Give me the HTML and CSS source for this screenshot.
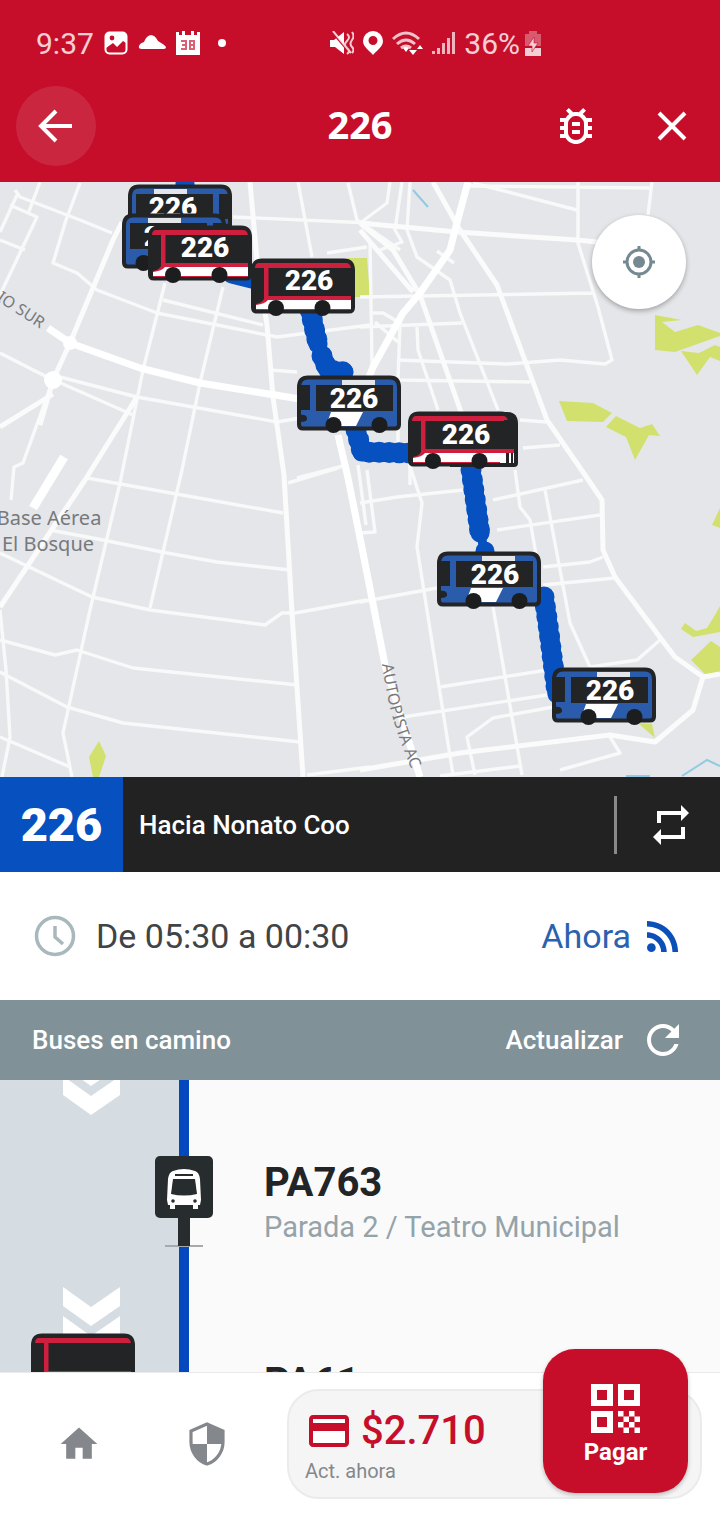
FILE: index.html
```html
<!DOCTYPE html>
<html lang="es">
<head>
  <meta charset="UTF-8" />
  <meta name="viewport" content="width=device-width, initial-scale=1" />
  <title>Recorrido 226</title>
  <link rel="stylesheet" href="styles.css">
</head>
<body>

  <header class="top">
    <div class="status">
      <div class="status-group">
        <span class="clock">9:37</span>
        <svg width="24" height="24" viewBox="0 0 24 24"><rect x="1.5" y="1.5" width="21" height="21" rx="4" fill="none" stroke="#fff" stroke-width="2"/><path d="M2 2h20v10l-3-2-6 6-4-4-7 5z" fill="#fff"/><circle cx="8" cy="7" r="2.4" fill="#c60e2b"/></svg>
        <svg width="28" height="24" viewBox="0 0 28 24"><path d="M4 18q-4 0-3-3 1-3 5-4 2-6 7-7 4 0 7 6 7 4 8 6 0 2-2 2z" fill="#fff"/></svg>
        <svg width="24" height="24" viewBox="0 0 24 24"><path d="M0 1h3v3h3V0h3v4h6V0h3v4h3V1h3v23H0z" fill="#fff"/><path d="M5 9h6v10H5v-2h4v-2H6v-2h3v-2H5zM13 9h6v10h-6zm2 2v2h2v-2zm0 4v2h2v-2z" fill="#c60e2b" fill-rule="evenodd" opacity=".65"/></svg>
        <span class="dot"></span>
      </div>
      <div class="status-group status-right">
        <svg width="24" height="24" viewBox="0 0 24 24"><path d="M0 9h4l10-8v22L5 16H0z" fill="#fff"/><path d="M2 1l18 21" stroke="#c60e2b" stroke-width="2"/><path d="M3 0l18 22M17 3q4 3 0 7t0 7 0 6M22 1q3 4 0 8t0 7 0 6" stroke="#fff" stroke-width="2" fill="none" opacity=".8"/></svg>
        <svg width="22" height="24" viewBox="0 0 22 24"><path d="M11 0a10 10 0 0 1 10 10c0 6-7 10-10 14C8 20 1 16 1 10A10 10 0 0 1 11 0zm0 5a4.5 4.5 0 1 0 0 9 4.5 4.5 0 0 0 0-9z" fill="#fff"/></svg>
        <svg width="32" height="24" viewBox="0 0 32 24"><g fill="none" stroke="#fff" stroke-width="3" opacity=".75"><path d="M1 8q13-12 26 0M5 13q9-8 18 0M9 17q5-4 10 0"/></g><path d="M14 21l-3-4q3-2 6 0zM28 14l3 4h-6zM21 24l-4-5h8z" fill="#fff"/></svg>
        <svg width="24" height="24" viewBox="0 0 24 24"><path d="M0 20h3v3H0zM5 17h3v6H5zM10 12h3v11h-3zM15 7h3v16h-3zM20 1h3v22h-3z" fill="#fff" opacity=".7"/></svg>
        <span class="battery">36%<svg width="18" height="25" viewBox="0 0 18 25"><path d="M5 0h8v3h4v12H1V3h4z" fill="#fff" opacity=".4"/><path d="M1 17h16v8H1z" fill="#fff"/><path d="M10 6v6h4l-6 9v-6H4z" fill="#fff" stroke="#c60e2b" stroke-width=".6"/></svg></span>
      </div>
    </div>

    <div class="appbar">
      <button class="back" aria-label="Volver">
        <svg width="36" height="36" viewBox="0 0 36 36"><path d="M18 3L3 18l15 15M4 18h30" fill="none" stroke="#fff" stroke-width="4"/></svg>
      </button>
      <h1>226</h1>
      <div class="actions">
        <button aria-label="Reportar un problema">
          <svg width="48" height="48" viewBox="0 0 24 24"><path fill="#fff" d="M20 8h-2.810c-.45-.78-1.070-1.450-1.820-1.960L17 4.410 15.590 3l-2.170 2.170C12.960 5.060 12.490 5 12 5s-.96.06-1.410.17L8.410 3 7 4.410l1.620 1.630C7.880 6.550 7.260 7.220 6.810 8H4v2h2.090c-.05.33-.09.66-.09 1v1H4v2h2v1c0 .34.04.67.09 1H4v2h2.810c1.040 1.790 2.970 3 5.190 3s4.150-1.210 5.190-3H20v-2h-2.090c.05-.33.09-.66.09-1v-1h2v-2h-2v-1c0-.34-.04-.67-.09-1H20V8zm-4 4v3c0 .22-.03.47-.07.7l-.1.65-.37.65c-.72 1.240-2.040 2-3.460 2s-2.740-.77-3.460-2l-.37-.64-.1-.65C8.030 15.480 8 15.230 8 15v-4c0-.23.03-.48.07-.7l.1-.65.37-.65c.3-.52.72-.97 1.210-1.310l.57-.39.74-.18c.31-.08.63-.12.94-.12.32 0 .63.04.95.12l.68.16.61.42c.5.34.91.78 1.210 1.310l.38.65.1.65c.04.22.07.47.07.69v1zm-6 2h4v2h-4zm0-4h4v2h-4z"/></svg>
        </button>
        <button aria-label="Cerrar">
          <svg width="30" height="30" viewBox="0 0 30 30"><path d="M2 2l26 26M28 2L2 28" stroke="#fff" stroke-width="4"/></svg>
        </button>
      </div>
    </div>
  </header>

  <main class="content">
    <section class="map" aria-label="Mapa del recorrido">
      <svg class="map-canvas" viewBox="0 182 720 595" preserveAspectRatio="xMidYMid slice">
        <defs>
          <symbol id="bus-red" viewBox="0 0 104 60" overflow="visible">
            <path d="M11 1.5h82q9 0 9 10v37q0 4-4 4H6q-4 0-4-4v-37q0-10 9-10z" fill="#222426" stroke="#222426" stroke-width="4"/>
            <path d="M7 4h88q4 0 5 5H17.500V37H100v14H5v-6q6-1 8-5V9H4Q4 5 7 4z" fill="#cf1f3e"/>
            <path d="M17 41h83v9H5v-4q9-1 12-5z" fill="#fff"/>
            <circle cx="25" cy="49" r="8" fill="#1c1d1f"/><circle cx="71.5" cy="49" r="8" fill="#1c1d1f"/>
          </symbol>
          <symbol id="bus-blue" viewBox="0 0 104 60" overflow="visible">
            <path d="M11 1.5h82q9 0 9 10v37q0 4-4 4H6q-4 0-4-4v-37q0-10 9-10z" fill="#2a5cab" stroke="#222426" stroke-width="4"/>
            <path d="M3 9h10v25H3zM19 9h77v26H19z" fill="#222426"/>
            <path d="M45 4h33v5H45z" fill="#e4e5e8"/>
            <path d="M34 36h32l-7 14H29z" fill="#fff"/>
            <path d="M3 39q6-1 7 3t-7 4z" fill="#222426"/>
            <circle cx="36.5" cy="49" r="8" fill="#1c1d1f"/><circle cx="82.5" cy="49" r="8" fill="#1c1d1f"/>
          </symbol>
        </defs>

        <rect y="182" width="720" height="595" fill="#e4e6ea"/>

        <!-- parks -->
        <g fill="#d2e16e">
          <path d="M347 258h20l3 39h-20z"/>
          <path d="M655 315l27 5-20 2 13 10 23-7 22 8v3l-45 16-20-2z"/>
          <path d="M681 351l18 2 16-8 5 2v14l-10-4-13 18z"/>
          <path d="M559 401l34 2 19 10-9 9-36-1z"/>
          <path d="M606 427l10-11 24 12 12-4 8 12-11-1-14 25-9-23z"/>
          <path d="M99 741l7 15-7 21h-6l-4-20z"/>
          <path d="M720 508v20l-8-3zM720 606v26l-27 5-12-8 4-6 11 8 11-3 8-13z"/>
          <path d="M711 641l9 6v25l-13 4-16-16zM638 723l14 1 3 14z"/>
        </g>

        <g fill="none" stroke="#8fcbe2" stroke-width="2">
          <path d="M413 190l15 17M682 776l25-16 13 6M626 776h24"/>
        </g>

        <!-- streets -->
        <g fill="none" stroke="#f8f9f9" stroke-width="3.4" stroke-linejoin="round">
          <path d="M15 190l5 7 60 23 32 13M17 195L0 232M80 183L66 220 53 263l24 10 20 17 60 23 120 24 93-12"/>
          <path d="M10 205l27 12L0 295M0 240l25 10M40 182L28 214"/>
          <path d="M165 283l-22 87-23 113-30 127-27 123 9 44M223 287l-23 96-18 87-32 138"/>
          <path d="M298 182l14 75M348 183l9 37 43 30M233 217l137 6M163 300l100 25"/>
          <path d="M0 353l47 24 86 38M60 377l77 20 140 25 23-4M270 370l27 2M327 253l40-6"/>
          <path d="M87 478l196 35M50 530l53 10 64 13 50 9 73 8M0 553l92 44 58 13 115 15 17-12h13l72-13"/>
          <path d="M0 640l55 15 22-5 56 18 165 17M0 672l67 35 56 16 177 19M0 737l70 30"/>
          <path d="M0 610l6 60 4 67-8 40M11 500l3-33 9-4 30-83M297 478l50-13M307 775l63-8M288 483l50-15"/>
          <path d="M390 182l-3 21-27 20M402 182l-7 48 7 12-22 8M410 182l-3 48 10 27 33 23 10 33 38 97"/>
          <path d="M473 183l104 27M578 182v61l20 64 14 53-7 4-45-4-53 4-110-4M360 297l233-4M360 327l102-4"/>
          <path d="M417 327l1 23 20 60M370 240l2 125M373 313h10l17 10-2 57 132 2M375 322l23 20M520 420l27 2M523 448l37-3"/>
          <path d="M652 182l-4 33M437 251l17 12M470 186l180 2M398 385v70M358 465l8 60M410 465v20"/>
          <path d="M408 460l14 43-5 44 36 228M360 503l37-6 66-7M493 500l90-20M497 530l103-15"/>
          <path d="M515 470l5 37 10 13 7 40M545 490l25 133 20 44M543 567l47-5 13-5M543 585l72-7M360 602l77-14"/>
          <path d="M493 607l29 168M440 687l107-17M403 717l144-22M553 707l-60 11-26 19 8 38M590 667l47-7 23-20"/>
          <path d="M610 737l10 16-60 17M367 470l8 62-15 1M440 776l80-10"/>
        </g>
        <g fill="none" stroke="#fbfbfc" stroke-width="5" stroke-linejoin="round">
          <path d="M122 222l-9 18-43 103-17 37-13 45M250 182l7 78 10 65 6 72 11 78 8 138 11 164"/>
          <path d="M360 223l97 9 120 8 30 3M137 397l-52 83-85 127M0 427l53-33"/>
          <path d="M360 223l33 27 27 45 42 120M360 230l53 62"/>
          <path d="M433 182l27 48 37 55 50 135 38 55 17 25 1 50 12 27 47 63 13 17 28 20-10 33-38 32-45-7-150 18-100 17M703 677l17-3"/>
        </g>
        <g fill="none" stroke="#fff" stroke-width="7" stroke-linejoin="round">
          <path d="M48 328l22 15 70 25 60 15 100 16"/>
          <path d="M468 182l-13 48-5 20-30 43-17 20-30 54-12 30M338 435l10 43 15 75 22 112 35 112"/>
          <path d="M64 457l-31 51" stroke-width="9"/>
        </g>
        <circle cx="53" cy="380" r="9" fill="#fff"/>
        <circle cx="70" cy="343" r="7" fill="#fff"/>

        <!-- map labels -->
        <g class="map-label">
          <text class="road" transform="translate(-4 300) rotate(33)">IO SUR</text>
          <text x="49" y="525" text-anchor="middle">Base Aérea</text>
          <text x="48" y="551" text-anchor="middle">El Bosque</text>
          <path id="autopista" d="M382 664Q388 708 400 740T424 800" fill="none"/>
          <text class="road"><textPath href="#autopista">AUTOPISTA AC</textPath></text>
        </g>

        <!-- route -->
        <g fill="none" stroke="#0750bf" stroke-width="19" stroke-linecap="round" stroke-linejoin="round">
          <path d="M185 184v20M232 274l24 6M310 310l8 34M322 356l6 14 16 2M356 430l6 22 50 1M471 470l9 63M485 551v8M544 597l5 35 8 62"/>
          <path d="M316 340l8 18M481 535l3 15" stroke-width="9"/>
          <path d="M310 310l8 34M322 356l6 14 16 2M356 430l6 22 50 1M471 470l9 63M544 597l5 35 8 62" stroke-width="21" stroke-dasharray="0 10"/>
        </g>

        <!-- buses -->
        <g class="bus-number">
          <use href="#bus-blue" width="104" height="60" transform="translate(232 185) scale(-1 1)"/>
          <text x="173" y="217">226</text>
          <use href="#bus-blue" width="104" height="60" transform="translate(226 214) scale(-1 1)"/>
          <text x="168" y="246">226</text>
          <use href="#bus-red" x="148" y="226" width="104" height="60"/>
          <text x="205" y="257">226</text>
          <use href="#bus-red" x="251" y="259" width="104" height="60"/>
          <text x="309" y="290">226</text>
          <use href="#bus-blue" x="297" y="376" width="104" height="60"/>
          <text x="354" y="408">226</text>
          <!-- longer red bus with a rear door -->
          <path d="M450 412h57q11 0 11 12v39q0 4-4 4h-64z" fill="#222426"/>
          <use href="#bus-red" x="408" y="412" width="104" height="60"/>
          <path d="M504 420h11v46h-11z" fill="#222426"/>
          <path d="M500 449h14v4h-14z" fill="#cf1f3e"/>
          <path d="M500 453h6v10h-6zM509 453h2v10h-2zM513 453h1v10h-1z" fill="#fff"/>
          <text x="466" y="444">226</text>
          <use href="#bus-blue" x="437" y="552" width="104" height="60"/>
          <text x="495" y="584">226</text>
          <use href="#bus-blue" x="552" y="668" width="104" height="60"/>
          <text x="610" y="700">226</text>
        </g>
      </svg>
      <button class="locate" aria-label="Mi ubicación">
        <svg width="34" height="34" viewBox="0 0 34 34"><g fill="none" stroke="#748990" stroke-width="3"><circle cx="17" cy="17" r="12"/><path d="M17 1v5M17 28v5M1 17h5M28 17h5"/></g><circle cx="17" cy="17" r="6" fill="#748990"/></svg>
      </button>
    </section>

    <section class="route">
      <strong class="route-number">226</strong>
      <span class="route-name">Hacia Nonato Coo</span>
      <button class="swap" aria-label="Cambiar sentido">
        <svg width="48" height="48" viewBox="0 0 24 24"><path fill="#fff" d="M7 7h10v3l4-4-4-4v3H5v6h2V7zm10 10H7v-3l-4 4 4 4v-3h12v-6h-2v4z"/></svg>
      </button>
    </section>

    <section class="schedule">
      <svg width="42" height="42" viewBox="0 0 42 42"><g fill="none" stroke="#a9b8bc" stroke-width="3.5"><circle cx="21" cy="21" r="18.5"/><path d="M21 11v11l8 7"/></g></svg>
      <span class="hours">De 05:30 a 00:30</span>
      <a class="now" href="#">Ahora
        <svg width="48" height="48" viewBox="0 0 24 24"><g fill="#0b50b8"><circle cx="6.18" cy="17.82" r="2.18"/><path d="M4 4.440v2.830c7.030 0 12.730 5.700 12.730 12.730h2.830c0-8.590-6.970-15.560-15.560-15.560zm0 5.660v2.830c3.900 0 7.070 3.170 7.070 7.070h2.830c0-5.470-4.430-9.900-9.900-9.900z"/></g></svg>
      </a>
    </section>

    <div class="arrivals-head">
      <h2>Buses en camino</h2>
      <button class="refresh">Actualizar
        <svg width="48" height="48" viewBox="0 0 24 24"><path fill="#fff" d="M17.650 6.350C16.200 4.900 14.210 4 12 4c-4.420 0-7.990 3.580-7.990 8s3.570 8 7.990 8c3.730 0 6.840-2.550 7.730-6h-2.080c-.82 2.330-3.040 4-5.650 4-3.310 0-6-2.690-6-6s2.690-6 6-6c1.660 0 3.140.69 4.220 1.780L13 11h7V4l-2.350 2.350z"/></svg>
      </button>
    </div>

    <ul class="stops">
      <li class="stop">
        <svg class="lane" width="216" height="200" viewBox="0 0 216 200">
          <path d="M0 0h179v200H0z" fill="#d5dce2"/><path d="M179 0h10v200h-10z" fill="#0548bd"/>
          <path d="M63-33l28 20 29-20v19L91 6 63-14zM63-4l28 20 29-20v19L91 35 63 15z" fill="#fff"/>
          <path d="M165 166h38" stroke="#a6aaad" stroke-width="2"/>
          <path d="M178 134h12v32h-12z" fill="#272c2f"/>
          <rect x="155" y="76" width="58" height="62" rx="5" fill="#272c2f"/>
          <path d="M173 91q11-4 22 0 4 1 5 8l1 21-1 5h-2v4h-5v-4h-18v4h-5v-4h-2l-1-5 1-21q1-7 5-8z" fill="#fff"/>
          <path d="M175 95h18" stroke="#272c2f" stroke-width="2"/>
          <path d="M173 99h22l2 15q-13 3-26 0z" fill="#272c2f"/>
          <circle cx="173" cy="121" r="1.8" fill="#272c2f"/><circle cx="195" cy="121" r="1.8" fill="#272c2f"/>
        </svg>
        <div class="stop-text">
          <h3>PA763</h3>
          <p>Parada 2 / Teatro Municipal</p>
        </div>
      </li>
      <li class="stop">
        <svg class="lane" width="216" height="200" viewBox="0 0 216 200">
          <path d="M0 0h179v200H0z" fill="#d5dce2"/><path d="M179 0h10v200h-10z" fill="#0548bd"/>
          <path d="M63 7l28 20 29-20v19L91 46 63 26zM63 36l28 20 29-20v19L91 75 63 55z" fill="#fff"/>
          <use href="#bus-red" x="31" y="54" width="104" height="60"/>
        </svg>
        <div class="stop-text">
          <h3>PA61</h3>
        </div>
      </li>
    </ul>
  </main>

  <nav class="bottom">
    <a class="tab" href="#" aria-label="Inicio">
      <svg width="44" height="44" viewBox="0 0 24 24"><path fill="#84888c" d="M10 20v-6h4v6h5v-8h3L12 3 2 12h3v8z"/></svg>
    </a>
    <a class="tab" href="#" aria-label="Seguridad">
      <svg width="48" height="48" viewBox="0 0 24 24"><path d="M12 2L4 5.500V11c0 5 3.400 9.700 8 11 4.600-1.300 8-6 8-11V5.500z" fill="#fff" stroke="#84888c" stroke-width="1.6"/><path d="M12 2l8 3.500V12h-8zM12 12v10c-4.200-1.400-7.600-5.400-8-10z" fill="#84888c"/></svg>
    </a>
    <div class="balance">
      <div class="amount">
        <svg width="48" height="48" viewBox="0 0 24 24"><path d="M4 6h16v12H4z" fill="#fff"/><path fill="#c60e2b" d="M20 4H4c-1.110 0-1.990.89-1.990 2L2 18c0 1.110.89 2 2 2h16c1.110 0 2-.89 2-2V6c0-1.110-.89-2-2-2zm0 14H4v-6h16v6zm0-10H4V6h16v2z"/></svg>
        $2.710
      </div>
      <div class="updated">Act. ahora</div>
      <button class="pay">
        <svg width="50" height="50" viewBox="0 0 50 50"><path fill="#fff" fill-rule="evenodd" d="M0 0h22v22H0zM6 6v10h10V6zM27 0h22v22H27zM33 6v10h10V6zM0 27h22v22H0zM6 33v10h10V33z"/><path fill="#fff" d="M27 27h5.500v5.500H27zM38 27h5.500v5.500H38zM32.500 32.500H38V38h-5.500zM43.500 32.500H49V38h-5.500zM27 38h5.500v5.500H27zM38 38h5.500v5.500H38zM32.500 43.500H38V49h-5.500zM43.500 43.500H49V49h-5.500z"/></svg>
        Pagar
      </button>
    </div>
  </nav>

</body>
</html>
```
FILE: styles.css
```css
* {
  box-sizing: border-box;
}

body {
  margin: 0;
  height: 100vh;
  display: flex;
  flex-direction: column;
  background: #fff;
  color: #222426;
  font-family: Roboto, "Liberation Sans", sans-serif;
}

h1, h2, h3, p, ul {
  margin: 0;
  padding: 0;
}

button {
  display: flex;
  align-items: center;
  justify-content: center;
  padding: 0;
  border: none;
  background: none;
  color: inherit;
  font: inherit;
  cursor: pointer;
}

a {
  color: inherit;
  text-decoration: none;
}

svg {
  display: block;
  flex: none;
}

/* Header */
.top {
  background: #c60e2b;
  color: #fff;
  padding-bottom: 16px;
}

.status {
  display: flex;
  align-items: center;
  justify-content: space-between;
  height: 86px;
  padding: 0 178px 0 36px;
}

.status-group {
  display: flex;
  align-items: center;
  gap: 10px;
}

.status-right {
  gap: 8px;
}

.clock,
.battery {
  font-size: 30px;
  opacity: 0.8;
}

.battery {
  display: flex;
  align-items: center;
  gap: 4px;
}

.dot {
  width: 8px;
  height: 8px;
  margin-left: 8px;
  border-radius: 50%;
  background: #fff;
}

.appbar {
  display: grid;
  grid-template-columns: 1fr auto 1fr;
  align-items: center;
}

.appbar h1 {
  font: bold 38px/48px "Noto Sans", sans-serif;
  padding-bottom: 4px;
}

.back {
  width: 80px;
  height: 80px;
  margin-left: 16px;
  border-radius: 50%;
  background: rgba(255, 255, 255, 0.1);
}

.actions {
  display: flex;
  justify-content: flex-end;
}

.actions button {
  width: 96px;
  height: 80px;
}

.content {
  flex: 1;
  min-height: 0;
  display: flex;
  flex-direction: column;
}

/* Map */
.map {
  position: relative;
}

.map-canvas {
  width: 100%;
  aspect-ratio: 720 / 595;
}

.map-label {
  fill: #77797d;
  font: 20px "Noto Sans", sans-serif;
}

.map-label .road {
  font-size: 16px;
}

.bus-number text {
  fill: #fff;
  font-size: 28px;
  font-weight: 900;
  text-anchor: middle;
}

.locate {
  position: absolute;
  top: 33px;
  right: 34px;
  width: 94px;
  height: 94px;
  border-radius: 50%;
  background: #fff;
  box-shadow: 0 2px 5px rgba(0, 0, 0, 0.3);
}

/* Route bar */
.route {
  display: flex;
  align-items: center;
  height: 95px;
  background: #222;
  color: #fff;
}

.route-number {
  align-self: stretch;
  display: flex;
  align-items: center;
  justify-content: center;
  width: 123px;
  background: #0750bf;
  font-size: 47px;
  font-weight: 900;
}

.route-name {
  flex: 1;
  padding-left: 16px;
  font-size: 26px;
  font-weight: 500;
}

.swap {
  width: 106px;
  height: 58px;
  padding-left: 4px;
  border-left: 3px solid #8a8a8a;
}

.schedule {
  display: flex;
  align-items: center;
  height: 128px;
  padding: 0 33px 0 34px;
  font-size: 34px;
}

.hours {
  flex: 1;
  padding-left: 20px;
  color: #414446;
}

.now {
  display: flex;
  align-items: center;
  gap: 8px;
  color: #2b62b0;
}

.arrivals-head {
  display: flex;
  align-items: center;
  justify-content: space-between;
  height: 80px;
  padding: 0 33px 0 32px;
  background: #819198;
  color: #fff;
  font-size: 26px;
  font-weight: 500;
}

.arrivals-head h2 {
  font: inherit;
}

.refresh {
  gap: 16px;
}

/* Stop list */
.stops {
  flex: 1;
  min-height: 0;
  overflow: hidden;
  list-style: none;
  background: #fafafa;
}

.stop {
  display: flex;
}

.stop-text {
  padding: 81px 0 0 48px;
  line-height: 44px;
}

.stop-text h3 {
  font-size: 40px;
}

.stop-text p {
  color: #94a3a9;
  font-size: 29px;
}

/* Bottom navigation */
.bottom {
  display: flex;
  padding: 16px 18px 19px 15px;
  border-top: 1px solid #e8eaea;
  background: #fff;
}

.tab {
  display: flex;
  align-items: center;
  justify-content: center;
  width: 128px;
}

.balance {
  position: relative;
  flex: 1;
  height: 110px;
  margin-left: 16px;
  padding: 16px;
  border: 2px solid #eaecec;
  border-radius: 32px;
  background: #f5f5f5;
}

.amount {
  display: flex;
  align-items: center;
  gap: 8px;
  color: #c60e2b;
  font-size: 40px;
  font-weight: 500;
  line-height: 48px;
}

.updated {
  margin-top: 4px;
  color: #84888c;
  font-size: 20px;
  line-height: 24px;
}

.pay {
  position: absolute;
  right: 12px;
  bottom: 4px;
  flex-direction: column;
  gap: 4px;
  width: 145px;
  height: 144px;
  padding-top: 8px;
  border-radius: 32px;
  background: #c60e2b;
  box-shadow: 0 2px 4px rgba(0, 0, 0, 0.25);
  color: #fff;
  font-size: 24px;
  font-weight: bold;
}
```
